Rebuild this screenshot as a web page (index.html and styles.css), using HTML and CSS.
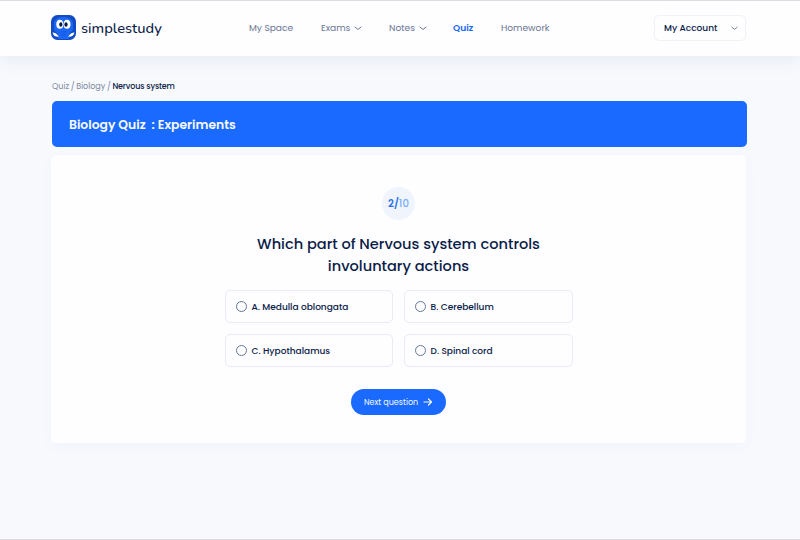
FILE: index.html
```html
<!DOCTYPE html>
<html lang="en">
<head>
<meta charset="utf-8">
<title>SimpleStudy – Biology Quiz</title>
<link rel="stylesheet" href="styles.css">
</head>
<body>
<header class="header">
  <a class="brand">
    <svg class="logo" viewBox="0 0 25 25" width="25" height="25">
      <rect width="25" height="25" rx="6.500" fill="#124bc4"/>
      <path d="M3 8C4 0 21 0 22 8V15L18 19V24H7V19L3 15Z" fill="#1b66f5"/>
      <ellipse cx="8.800" cy="9.200" rx="3.500" ry="4.500" fill="#fff"/>
      <ellipse cx="16" cy="9.200" rx="3.500" ry="4.500" fill="#fff"/>
      <ellipse cx="9.800" cy="9.500" rx="1.600" ry="2.300" fill="#071a4c"/>
      <ellipse cx="15" cy="9.500" rx="1.600" ry="2.300" fill="#071a4c"/>
      <path d="M1.500 17.500C4 17.500 6.500 19 7.800 21.700C4.500 22 2 20.500 1.500 17.500ZM23.500 17.500C21 17.500 18.500 19 17.200 21.700C20.500 22 23 20.500 23.500 17.500Z" fill="#fff"/>
      <path d="M9.500 17h6M10 19.800h5" stroke="#1553d8" stroke-width=".8"/>
    </svg>
    <span class="wordmark">simplestudy</span>
  </a>
  <nav class="nav">
    <a class="nav-space">My Space</a>
    <a class="nav-exams"><span>Exams</span><svg class="chevron" viewBox="0 0 8 5" width="8" height="5"><path d="M1 1l3 2.500L7 1"/></svg></a>
    <a class="nav-notes"><span>Notes</span><svg class="chevron" viewBox="0 0 8 5" width="8" height="5"><path d="M1 1l3 2.500L7 1"/></svg></a>
    <a class="nav-quiz">Quiz</a>
    <a class="nav-homework">Homework</a>
  </nav>
  <button class="account"><span>My Account</span><svg class="chevron" viewBox="0 0 8 5" width="7" height="5"><path d="M1 1l3 2.500L7 1"/></svg></button>
</header>
<main class="main">
  <div class="crumbs"><span>Quiz</span><span class="slash">/</span><span>Biology</span><span class="slash">/</span><span class="current">Nervous system</span></div>
  <h1 class="banner"><span>Biology Quiz</span><span class="colon">:</span><span>Experiments</span></h1>
  <section class="card">
    <div class="progress"><b>2/</b><span>10</span></div>
    <h2 class="question">Which part of Nervous system controls<br>involuntary actions</h2>
    <div class="options">
      <div class="option"><i class="radio"></i><span>A. Medulla oblongata</span></div>
      <div class="option"><i class="radio"></i><span>B. Cerebellum</span></div>
      <div class="option"><i class="radio"></i><span>C. Hypothalamus</span></div>
      <div class="option"><i class="radio"></i><span>D. Spinal cord</span></div>
    </div>
    <button class="next"><span>Next question</span><svg viewBox="0 0 10 8" width="10" height="8"><path d="M1 4h7.500M5.500 1l3 3-3 3"/></svg></button>
  </section>
</main>
</body>
</html>
```
FILE: styles.css
```css
* { box-sizing: border-box; }
body {
  margin: 0;
  height: 540px;
  overflow: hidden;
  background: #f7f9fd;
  border-top: 1px solid #dcdce0;
  border-bottom: 1px solid #dcdce0;
  font-family: Poppins, Inter, sans-serif;
  color: #0a1c47;
}
button { font-family: inherit; color: inherit; margin: 0; }
.header {
  height: 55px;
  padding: 0 54px 1px 51px;
  display: flex;
  align-items: center;
  background: #fefdff;
  box-shadow: 0 4px 18px rgba(50, 70, 120, .08);
}
.brand { display: flex; align-items: center; gap: 5px; width: 198px; }
.logo { flex: none; margin-bottom: 1px; }
.wordmark { font: 500 14.700px/20px Nunito, "Open Sans", sans-serif; }
.nav { display: flex; color: #6b7893; font-size: 9.100px; line-height: 14px; white-space: nowrap; }
.nav a { display: flex; align-items: center; }
.nav-space { width: 72px; }
.nav-exams, .nav-notes { gap: 4px; }
.nav-exams { width: 68px; }
.nav-notes { width: 64px; }
.nav .nav-quiz { width: 48px; color: #1769f5; font-weight: 600; }
.chevron { fill: none; stroke: currentColor; stroke-linecap: round; stroke-linejoin: round; margin-top: 1px; }
.account {
  margin-left: auto;
  width: 92px;
  height: 26px;
  padding: 0 7px 0 9px;
  display: flex;
  align-items: center;
  justify-content: space-between;
  border: 1px solid #f0f2f8;
  border-radius: 5px;
  background: #fefdff;
  font-size: 9px;
  font-weight: 500;
}
.account .chevron { stroke: #65728f; }
.main { padding: 24px 53px 0 52px; }
.crumbs { display: flex; height: 14px; line-height: 14px; font-size: 8px; color: #7d899f; white-space: nowrap; }
.slash { margin: 0 1.700px; }
.current { color: #0a1c47; font-weight: 500; letter-spacing: -.15px; }
.banner {
  display: flex;
  align-items: center;
  height: 46px;
  margin: 7px 0 8px;
  padding: 1px 0 0 17px;
  border-radius: 5px;
  background: #1b6aff;
  color: #f7faff;
  font-size: 12.350px;
  font-weight: 600;
}
.colon { margin: 0 3px 0 6px; }
.card {
  display: flex;
  flex-direction: column;
  align-items: center;
  width: 695px;
  height: 288px;
  margin-left: -1px;
  padding-top: 32px;
  border-radius: 5px;
  background: #fefdff;
  box-shadow: 0 3px 14px rgba(50, 80, 150, .03);
}
.progress {
  display: flex;
  align-items: center;
  justify-content: center;
  width: 33px;
  height: 33px;
  border-radius: 50%;
  background: #f0f5fd;
  color: #76aafa;
  font-size: 10.200px;
  font-weight: 500;
}
.progress b { color: #2871e8; font-weight: 600; }
.question { margin: 13px 0 0; font-size: 14.570px; line-height: 22px; font-weight: 500; text-align: center; white-space: nowrap; }
.options { display: grid; grid-template-columns: 168px 169px; grid-auto-rows: 33px; gap: 11px; margin-top: 13px; }
.option { display: flex; align-items: center; gap: 5px; padding-left: 10px; border: 1px solid #e7ebf4; border-radius: 5px; font-size: 9px; font-weight: 500; white-space: nowrap; }
.option span { padding-top: 1px; }
.radio { width: 11px; height: 11px; border: 1px solid #65769b; border-radius: 50%; }
.next { display: flex; align-items: center; justify-content: center; gap: 5px; width: 95px; height: 26px; margin-top: 22px; padding: 0; border: 0; border-radius: 13px; background: #1b6aff; color: #f4f8ff; font-size: 8px; }
.next span { padding-top: 1px; }
.next svg { fill: none; stroke: currentColor; stroke-width: 1.2; stroke-linecap: round; stroke-linejoin: round; }
```
